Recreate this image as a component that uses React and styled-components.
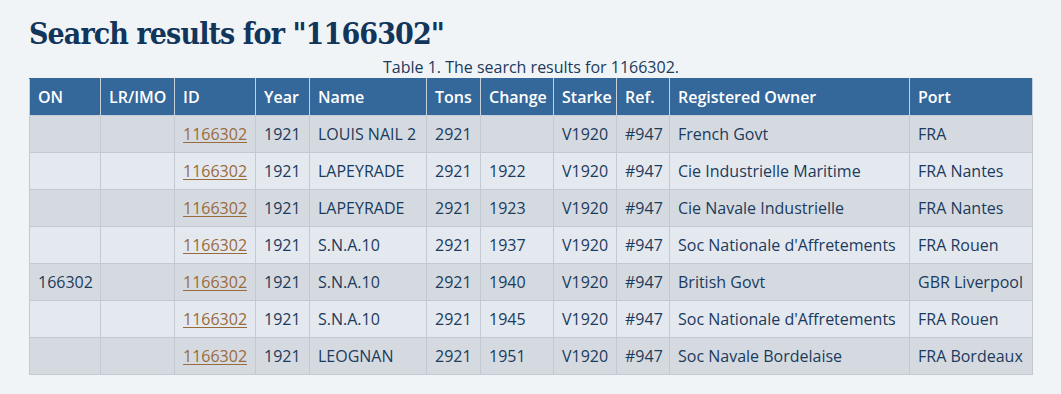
import styled, { createGlobalStyle } from "styled-components";

const GlobalStyle = createGlobalStyle`
  html, body {
    margin: 0;
    padding: 0;
    background: #f1f4f7;
  }
  body {
    font-family: "Open Sans", "Noto Sans", sans-serif;
    color: #1b3a5c;
  }
`;

const columns = [
  { label: "ON", width: 71 },
  { label: "LR/IMO", width: 74 },
  { label: "ID", width: 81 },
  { label: "Year", width: 54 },
  { label: "Name", width: 117 },
  { label: "Tons", width: 54 },
  { label: "Change", width: 73 },
  { label: "Starke", width: 63 },
  { label: "Ref.", width: 53 },
  { label: "Registered Owner", width: 240 },
  { label: "Port", width: 123 },
];

const rows = [
  ["", "", "1166302", "1921", "LOUIS NAIL 2", "2921", "", "V1920", "#947", "French Govt", "FRA"],
  ["", "", "1166302", "1921", "LAPEYRADE", "2921", "1922", "V1920", "#947", "Cie Industrielle Maritime", "FRA Nantes"],
  ["", "", "1166302", "1921", "LAPEYRADE", "2921", "1923", "V1920", "#947", "Cie Navale Industrielle", "FRA Nantes"],
  ["", "", "1166302", "1921", "S.N.A.10", "2921", "1937", "V1920", "#947", "Soc Nationale d'Affretements", "FRA Rouen"],
  ["166302", "", "1166302", "1921", "S.N.A.10", "2921", "1940", "V1920", "#947", "British Govt", "GBR Liverpool"],
  ["", "", "1166302", "1921", "S.N.A.10", "2921", "1945", "V1920", "#947", "Soc Nationale d'Affretements", "FRA Rouen"],
  ["", "", "1166302", "1921", "LEOGNAN", "2921", "1951", "V1920", "#947", "Soc Navale Bordelaise", "FRA Bordeaux"],
];

export default function App() {
  return (
    <>
      <GlobalStyle />
      <Page>
        <Title>Search results for "1166302"</Title>
        <Table>
          <Caption>Table 1. The search results for 1166302.</Caption>
          <colgroup>
            {columns.map((c) => (
              <Col key={c.label} $width={c.width} />
            ))}
          </colgroup>
          <thead>
            <tr>
              {columns.map((c) => (
                <Th key={c.label}>{c.label}</Th>
              ))}
            </tr>
          </thead>
          <tbody>
            {rows.map((row, i) => (
              <Row key={i} $odd={i % 2 === 0}>
                {row.map((cell, j) => (
                  <Td key={j}>
                    {j === 2 ? <IdLink href="#">{cell}</IdLink> : cell}
                  </Td>
                ))}
              </Row>
            ))}
          </tbody>
        </Table>
      </Page>
    </>
  );
}

const Page = styled.div`
  padding: 14px 29px 20px;
`;

const Title = styled.h1`
  margin: 0 0 2px;
  font-family: "DejaVu Serif Condensed", "DejaVu Serif", serif;
  font-weight: 700;
  font-size: 30px;
  line-height: 40px;
  letter-spacing: -0.9px;
  color: #12355b;
`;

const Table = styled.table`
  border-collapse: collapse;
  table-layout: fixed;
  width: 1003px;
  font-size: 16px;
`;

const Caption = styled.caption`
  font-size: 16px;
  line-height: 22px;
  color: #1b3a5c;
  text-align: center;
`;

const Col = styled.col`
  width: ${(p) => p.$width}px;
`;

const Th = styled.th`
  background: #34679a;
  color: #ffffff;
  font-weight: 600;
  text-align: left;
  padding: 7px 8px;
  line-height: 22px;
  border: 1px solid #c6cfda;
  border-top-color: #34679a;
  white-space: nowrap;
`;

const Row = styled.tr`
  background: ${(p) => (p.$odd ? "#d5dae1" : "#e4e9f0")};
`;

const Td = styled.td`
  padding: 7px 8px;
  line-height: 22px;
  border: 1px solid #c3c9d1;
  white-space: nowrap;
  color: #1b3a5c;
`;

const IdLink = styled.a`
  color: #9a6b3c;
  text-decoration: underline;
  text-underline-offset: 2px;
`;
